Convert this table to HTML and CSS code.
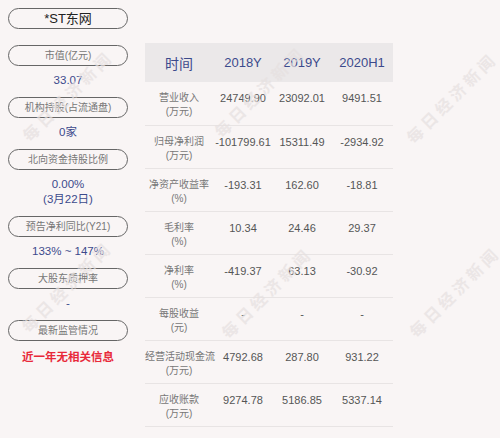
FILE: index.html
```html
<!DOCTYPE html>
<html lang="zh">
<head>
<meta charset="utf-8">
<link rel="stylesheet" href="styles.css">
</head>
<body>
<div class="page">
  <div class="side">
    <div class="pill pill-name">*ST东网</div>
    <div class="pill">市值(亿元)</div>
    <div class="val">33.07</div>
    <div class="pill">机构持股(占流通盘)</div>
    <div class="val">0家</div>
    <div class="pill">北向资金持股比例</div>
    <div class="val">0.00%<br>(3月22日)</div>
    <div class="pill">预告净利同比(Y21)</div>
    <div class="val">133% ~ 147%</div>
    <div class="pill">大股东质押率</div>
    <div class="val">-</div>
    <div class="pill">最新监管情况</div>
    <div class="val red">近一年无相关信息</div>
  </div>
  <table class="fin">
    <thead>
      <tr><th class="c0">时间</th><th class="c1">2018Y</th><th class="c2">2019Y</th><th class="c3">2020H1</th></tr>
    </thead>
    <tbody>
      <tr><td class="lab">营业收入<br>(万元)</td><td>24749.90</td><td>23092.01</td><td>9491.51</td></tr>
      <tr><td class="lab">归母净利润<br>(万元)</td><td>-101799.61</td><td>15311.49</td><td>-2934.92</td></tr>
      <tr><td class="lab">净资产收益率<br>(%)</td><td>-193.31</td><td>162.60</td><td>-18.81</td></tr>
      <tr><td class="lab">毛利率<br>(%)</td><td>10.34</td><td>24.46</td><td>29.37</td></tr>
      <tr><td class="lab">净利率<br>(%)</td><td>-419.37</td><td>63.13</td><td>-30.92</td></tr>
      <tr><td class="lab">每股收益<br>(元)</td><td>-</td><td>-</td><td>-</td></tr>
      <tr><td class="lab">经营活动现金流<br>(万元)</td><td>4792.68</td><td>287.80</td><td>931.22</td></tr>
      <tr><td class="lab">应收账款<br>(万元)</td><td>9274.78</td><td>5186.85</td><td>5337.14</td></tr>
    </tbody>
  </table>
  <svg class="wm-layer" width="500" height="438" viewBox="0 0 500 438" aria-hidden="true">
    <text x="68" y="102" transform="rotate(-45 68 96)">每日经济新闻</text>
    <text x="260" y="98" transform="rotate(-45 260 92)">每日经济新闻</text>
    <text x="452" y="104" transform="rotate(-45 452 98)">每日经济新闻</text>
    <text x="67" y="293" transform="rotate(-45 67 287)">每日经济新闻</text>
    <text x="267" y="299" transform="rotate(-45 267 293)">每日经济新闻</text>
    <text x="455" y="298" transform="rotate(-45 455 292)">每日经济新闻</text>
  </svg>
</div>
</body>
</html>
```

FILE: styles.css
```css
html, body {
  margin: 0;
  padding: 0;
  background: #f9f5f5;
}
body {
  font-family: "Liberation Sans", "Noto Sans CJK SC", sans-serif;
  width: 500px;
  height: 438px;
  overflow: hidden;
}
.page {
  position: relative;
  display: flex;
  align-items: flex-start;
  gap: 17px;
  padding: 8px 0 0 8px;
  height: 430px;
  overflow: hidden;
}
.side {
  width: 120px;
  display: flex;
  flex-direction: column;
  align-items: stretch;
}
.pill {
  box-sizing: border-box;
  height: 21px;
  border: 1.2px solid #666;
  border-radius: 11px;
  text-align: center;
  font-size: 10px;
  line-height: 19px;
  color: #777;
  white-space: nowrap;
}
.pill-name {
  color: #222;
  font-size: 13px;
  margin-bottom: 16px;
}
.val {
  text-align: center;
  color: #3c4a8c;
  font-size: 11.5px;
  line-height: 15px;
  padding: 7px 0 9px;
}
.red {
  color: #e8293a;
  font-weight: bold;
  font-size: 11.5px;
  padding-top: 9px;
}
.fin {
  margin-top: 35px;
  border-collapse: collapse;
  width: 248px;
  table-layout: fixed;
}
.fin th {
  background: #ebe8e9;
  color: #3c4a8c;
  font-weight: normal;
  font-size: 13px;
  height: 39px;
  padding: 0;
  text-align: center;
}
.fin th.c0 { font-size: 14px; }
.c0 { width: 68px; }
.c1 { width: 60px; }
.c2 { width: 58px; }
.c3 { width: 62px; }
.fin td {
  border-bottom: 1px solid #e8e4e4;
  height: 43px;
  padding: 10px 0 0;
  box-sizing: border-box;
  vertical-align: top;
  text-align: center;
  font-size: 11px;
  line-height: 13px;
  color: #555;
  white-space: nowrap;
}
.fin td.lab {
  font-size: 10px;
  color: #777;
  line-height: 14px;
  padding-top: 9px;
}
.wm-layer {
  position: absolute;
  left: 0;
  top: 0;
  pointer-events: none;
}
.wm-layer text {
  font-family: "Noto Sans CJK SC", sans-serif;
  font-size: 16px;
  font-weight: bold;
  letter-spacing: 4px;
  text-anchor: middle;
  fill: #e6e0e0;
  opacity: 0.7;
}
```
